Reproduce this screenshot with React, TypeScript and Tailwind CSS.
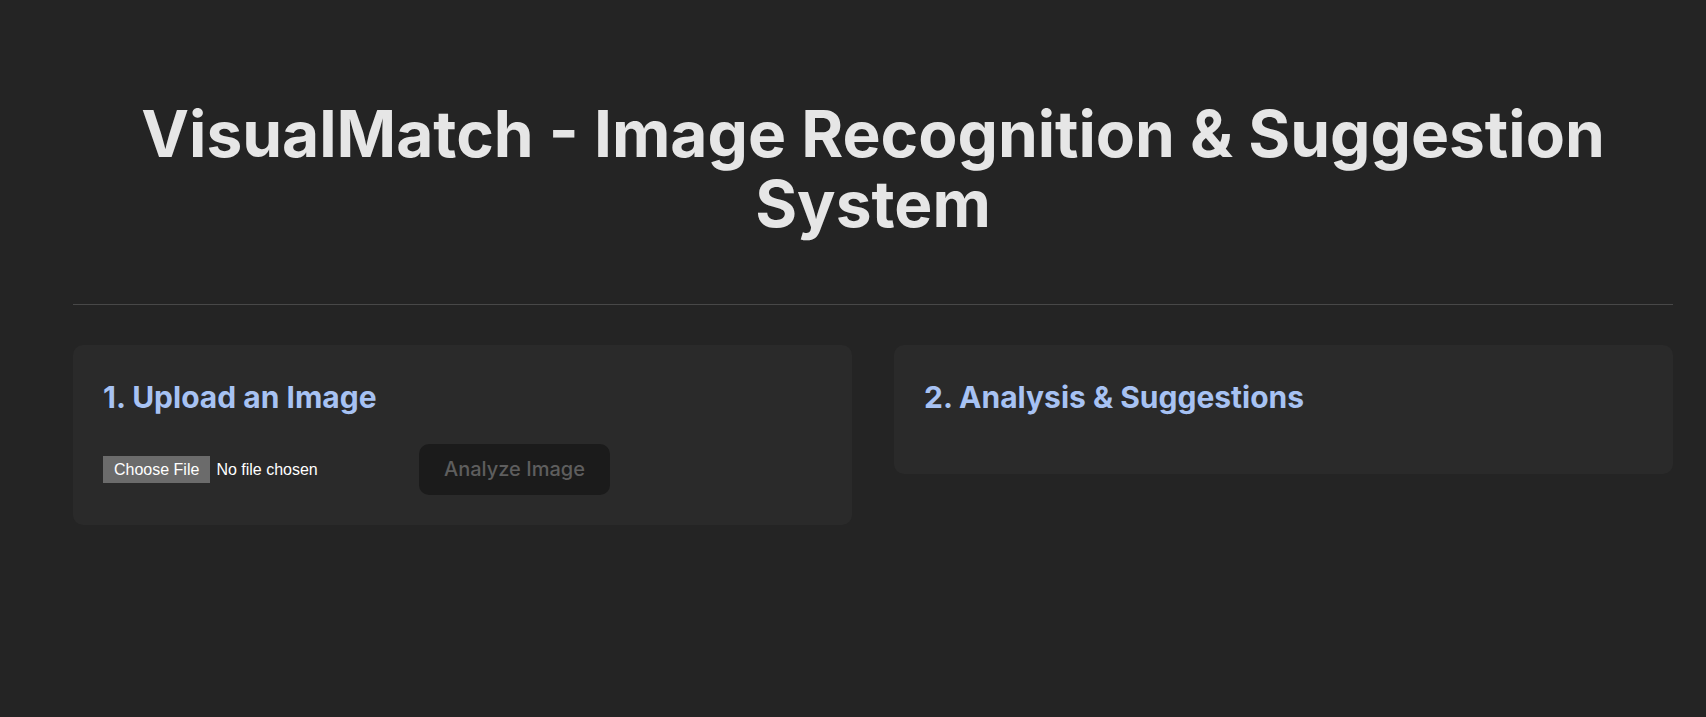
export default function App() {
  return (
    <div className="min-h-screen bg-[#242424] [color-scheme:dark]" style={{ fontFamily: 'Inter, "Noto Sans", sans-serif' }}>
      <div className="ml-[73px] w-[1600px]">
        <header className="pt-[99px] pb-[64px] border-b border-[#484848] text-center">
          <h1 className="text-[64px] leading-[1.1] font-bold text-[#e6e6e6]">
            VisualMatch - Image Recognition &amp; Suggestion System
          </h1>
        </header>

        <main className="grid grid-cols-2 gap-[42px] mt-[40px] items-start">
          <section className="bg-[#2a2a2a] rounded-[10px] p-[30px]">
            <h2 className="text-[30px] leading-[35px] font-bold text-[#a7c2f3] mt-[5px] mb-[29px]">1. Upload an Image</h2>
            <div className="flex items-center gap-4">
              <input
                type="file"
                accept="image/*"
                className="w-[300px] text-white text-[16px] leading-[19px] file:bg-[#6b6b6b] file:text-white file:px-[11px] file:py-[4px] file:mr-[6px] file:border-0"
                style={{ fontFamily: '"Liberation Sans", Arial, sans-serif' }}
              />
              <button
                disabled
                className="bg-[#1b1b1b] text-[#5e5e5e] rounded-[10px] px-[25px] py-[13px] text-[20px] leading-[25px] font-medium cursor-not-allowed"
              >
                Analyze Image
              </button>
            </div>
          </section>

          <section className="bg-[#2a2a2a] rounded-[10px] p-[30px]">
            <h2 className="text-[30px] leading-[35px] font-bold text-[#a7c2f3] mt-[5px] mb-[29px]">2. Analysis &amp; Suggestions</h2>
          </section>
        </main>
      </div>
    </div>
  );
}
